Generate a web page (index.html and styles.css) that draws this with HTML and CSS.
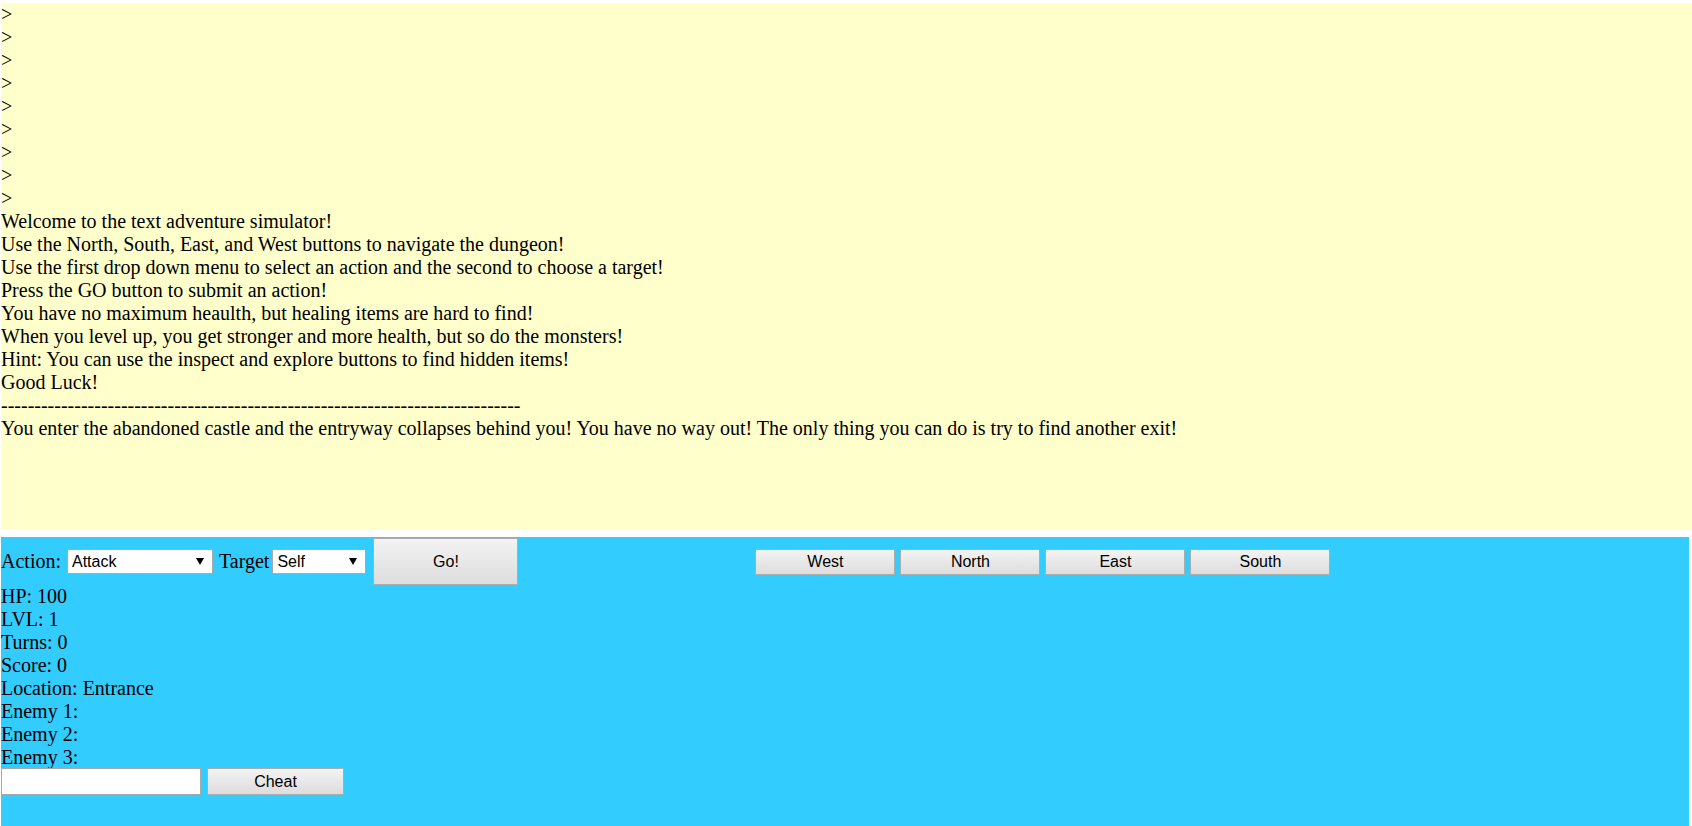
FILE: index.html
```html
<!DOCTYPE html>
<html>
<head>
<meta charset="utf-8">
<title>Text Adventure</title>
<link rel="stylesheet" href="styles.css">
</head>
<body>
<div class="log">
<div>&gt;</div>
<div>&gt;</div>
<div>&gt;</div>
<div>&gt;</div>
<div>&gt;</div>
<div>&gt;</div>
<div>&gt;</div>
<div>&gt;</div>
<div>&gt;</div>
<div>Welcome to the text adventure simulator!</div>
<div>Use the North, South, East, and West buttons to navigate the dungeon!</div>
<div>Use the first drop down menu to select an action and the second to choose a target!</div>
<div>Press the GO button to submit an action!</div>
<div>You have no maximum heaulth, but healing items are hard to find!</div>
<div>When you level up, you get stronger and more health, but so do the monsters!</div>
<div>Hint: You can use the inspect and explore buttons to find hidden items!</div>
<div>Good Luck!</div>
<div>------------------------------------------------------------------------------</div>
<div>You enter the abandoned castle and the entryway collapses behind you! You have no way out! The only thing you can do is try to find another exit!</div>
</div>
<div class="panel">
  <div class="controls">
    <span class="label">Action:</span>
    <span class="select-wrap action"><select class="select"><option>Attack</option><option>Inspect</option><option>Explore</option></select></span>
    <span class="label target-label">Target</span>
    <span class="select-wrap target"><select class="select"><option>Self</option></select></span>
    <button class="btn go">Go!</button>
    <div class="directions">
      <button class="btn dir">West</button>
      <button class="btn dir">North</button>
      <button class="btn dir">East</button>
      <button class="btn dir">South</button>
    </div>
  </div>
  <div class="stats">
    <div>HP: 100</div>
    <div>LVL: 1</div>
    <div>Turns: 0</div>
    <div>Score: 0</div>
    <div>Location: Entrance</div>
    <div>Enemy 1:</div>
    <div>Enemy 2:</div>
    <div>Enemy 3:</div>
  </div>
  <div class="cheat-row">
    <input class="cheat-input" type="text">
    <button class="btn cheat">Cheat</button>
  </div>
</div>
</body>
</html>
```

FILE: styles.css
```css
html, body {
  margin: 0;
  padding: 0;
  overflow: hidden;
  background: #ffffff;
}

body {
  font-family: "Liberation Serif", "Times New Roman", serif;
  font-size: 20px;
  line-height: 23px;
  color: #000;
}

.log {
  margin: 3px 0 0 1px;
  height: 526px;
  background: #ffffcc;
  overflow: hidden;
  white-space: nowrap;
}

.panel {
  margin: 8px 0 0 1px;
  width: 1688px;
  height: 289px;
  background: #33ccff;
}

.controls {
  display: flex;
  align-items: center;
  height: 47px;
  padding: 1px 0 0;
}

.label {
  white-space: nowrap;
}

.select-wrap {
  position: relative;
  display: block;
  margin-left: 6px;
}

.target-label {
  margin-left: 6px;
}

.select-wrap.target {
  margin-left: 3px;
}

.select {
  -webkit-appearance: none;
  appearance: none;
  display: block;
  box-sizing: border-box;
  height: 25px;
  margin: 0;
  padding: 0 0 0 4px;
  border: 1px solid #a9a9a9;
  border-radius: 0;
  background: #ffffff;
  font-family: "Liberation Sans", Arial, sans-serif;
  font-size: 16px;
  color: #000;
  outline: none;
}

.action .select { width: 146px; }
.target .select { width: 94px; }

.select-wrap::after {
  content: "";
  position: absolute;
  right: 9px;
  top: 9px;
  border-left: 4px solid transparent;
  border-right: 4px solid transparent;
  border-top: 7px solid #000;
  pointer-events: none;
}

.btn {
  box-sizing: border-box;
  margin: 0;
  padding: 0;
  border: 1px solid #acacac;
  border-radius: 0;
  background: linear-gradient(#f3f3f3, #dddddd);
  font-family: "Liberation Sans", Arial, sans-serif;
  font-size: 16px;
  color: #000;
}

.go {
  width: 145px;
  height: 47px;
  margin-left: 7px;
}

.directions {
  display: flex;
  gap: 5px;
  margin-left: 237px;
}

.dir {
  width: 140px;
  height: 26px;
}

.stats {
  white-space: nowrap;
}

.cheat-row {
  display: flex;
  align-items: center;
  gap: 6px;
  margin-top: -1px;
}

.cheat-input {
  box-sizing: border-box;
  width: 200px;
  height: 27px;
  margin: 0;
  padding: 0 2px;
  border: 1px solid #a9a9a9;
  background: #fff;
  font-family: "Liberation Sans", Arial, sans-serif;
  font-size: 16px;
  outline: none;
}

.cheat {
  width: 137px;
  height: 27px;
}
```
